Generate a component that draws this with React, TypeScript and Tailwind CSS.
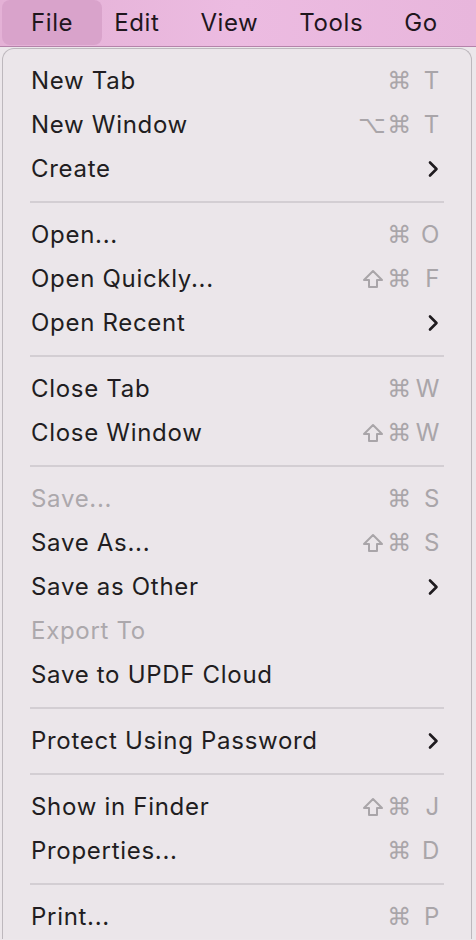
import React from "react";

type Item =
  | { kind: "sep" }
  | {
      kind: "item";
      label: string;
      mods?: string;
      keyChar?: string;
      submenu?: boolean;
      disabled?: boolean;
    };

const items: Item[] = [
  { kind: "item", label: "New Tab", mods: "⌘", keyChar: "T" },
  { kind: "item", label: "New Window", mods: "⌥⌘", keyChar: "T" },
  { kind: "item", label: "Create", submenu: true },
  { kind: "sep" },
  { kind: "item", label: "Open...", mods: "⌘", keyChar: "O" },
  { kind: "item", label: "Open Quickly...", mods: "⇧⌘", keyChar: "F" },
  { kind: "item", label: "Open Recent", submenu: true },
  { kind: "sep" },
  { kind: "item", label: "Close Tab", mods: "⌘", keyChar: "W" },
  { kind: "item", label: "Close Window", mods: "⇧⌘", keyChar: "W" },
  { kind: "sep" },
  { kind: "item", label: "Save...", mods: "⌘", keyChar: "S", disabled: true },
  { kind: "item", label: "Save As...", mods: "⇧⌘", keyChar: "S" },
  { kind: "item", label: "Save as Other", submenu: true },
  { kind: "item", label: "Export To", disabled: true },
  { kind: "item", label: "Save to UPDF Cloud" },
  { kind: "sep" },
  { kind: "item", label: "Protect Using Password", submenu: true },
  { kind: "sep" },
  { kind: "item", label: "Show in Finder", mods: "⇧⌘", keyChar: "J" },
  { kind: "item", label: "Properties...", mods: "⌘", keyChar: "D" },
  { kind: "sep" },
  { kind: "item", label: "Print...", mods: "⌘", keyChar: "P" },
];

const font = { fontFamily: "Inter, 'Noto Sans', sans-serif" };
const symFont = { fontFamily: "'DejaVu Sans', sans-serif" };

function Chevron() {
  return (
    <svg width="12" height="18" viewBox="0 0 12 18" className="mr-[1px]">
      <path d="M3 2.5 L9.5 9 L3 15.5" fill="none" stroke="#1f1b1f" strokeWidth="2.6" strokeLinecap="round" strokeLinejoin="round" />
    </svg>
  );
}

function ShiftIcon() {
  return (
    <svg width="22" height="20" viewBox="0 0 22 20" className="mr-[3px]">
      <path d="M11 2 L20 11 L15 11 L15 18 L7 18 L7 11 L2 11 Z" fill="none" stroke="#a9a5a9" strokeWidth="2" strokeLinejoin="round" />
    </svg>
  );
}

function Mods({ mods }: { mods: string }) {
  return (
    <span className="flex items-center">
      {mods.split("").map((m, i) =>
        m === "⇧" ? (
          <ShiftIcon key={i} />
        ) : (
          <span key={i} className="text-[24px] mr-[1px]" style={symFont}>
            {m}
          </span>
        )
      )}
    </span>
  );
}

function MenuBar() {
  const others = ["Edit", "View", "Tools", "Go"];
  return (
    <div className="flex h-[47px] items-stretch border-b border-[#b583aa] bg-gradient-to-r from-[#e4b1d6] via-[#ecbbe1] to-[#e8b6dc] text-[24px] tracking-[0.6px] text-[#1f161d]">
      <div className="ml-[2px] flex h-[45px] items-center rounded-[8px] bg-[#d9a3cb] px-[29px]">File</div>
      {others.map((m, i) => (
        <div key={m} className={`flex h-[45px] items-center ${i === 0 ? "ml-[12px]" : "ml-[41px]"}`}>
          {m}
        </div>
      ))}
    </div>
  );
}

export default function App() {
  return (
    <div className="h-[940px] w-[476px] overflow-hidden bg-[#ece7eb]" style={font}>
      <MenuBar />
      <div className="ml-[2px] mt-[1px] w-[470px] rounded-t-[12px] border border-b-0 border-[#bdb8bd] bg-[#ebe6ea] pt-[10px]">
        {items.map((it, idx) =>
          it.kind === "sep" ? (
            <div key={idx} className="flex h-[22px] items-center px-[27px]">
              <div className="mb-[1px] h-[2px] w-full bg-[#d3ced3]" />
            </div>
          ) : (
            <div key={idx} className="flex h-[44px] items-center justify-between pl-[28px] pr-[31px] text-[24px] tracking-[0.7px]">
              <span className={it.disabled ? "text-[#aca8ac]" : "text-[#211d21]"}>{it.label}</span>
              {it.submenu ? (
                <Chevron />
              ) : it.keyChar ? (
                <span className="flex items-center text-[#a9a5a9]">
                  {it.mods && <Mods mods={it.mods} />}
                  <span className="w-[27px] text-right text-[24px]">{it.keyChar}</span>
                </span>
              ) : null}
            </div>
          )
        )}
      </div>
    </div>
  );
}
